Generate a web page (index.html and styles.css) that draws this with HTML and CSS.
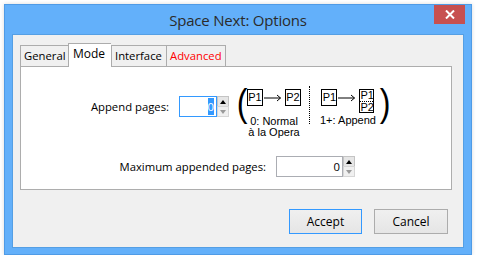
FILE: index.html
```html
<!DOCTYPE html>
<html lang="en">
  <head>
    <meta charset="UTF-8" />
    <title>Space Next: Options</title>
    <link rel="stylesheet" href="styles.css">
  </head>
  <body>
    <div class="window">
      <div class="titlebar">
        <span></span>
        <div class="title">Space Next: Options</div>
        <div class="close">
          <svg width="10" height="9" viewBox="0 0 10 9">
            <path d="M1 0.5 L9 8.5 M9 0.5 L1 8.5" stroke="#fff" stroke-width="2" />
          </svg>
        </div>
      </div>

      <div class="client">
        <div class="tabs">
          <div class="tab">General</div>
          <div class="tab active">Mode</div>
          <div class="tab">Interface</div>
          <div class="tab advanced">Advanced</div>
        </div>

        <div class="panel">
          <div class="row row-append">
            <div class="field-group">
              <label class="label label-append">Append pages:</label>
              <div class="field field-small focused"><span class="sel">0</span></div>
              <div class="spinner">
                <div class="spin up"><span class="tri tri-up"></span></div>
                <div class="spin down"><span class="tri tri-down"></span></div>
              </div>
            </div>

            <div class="diagram">
              <span class="paren">(</span>
              <div class="mode">
                <div class="flow">
                  <div class="page">P1</div>
                  <svg class="arrow" width="18" height="8" viewBox="0 0 18 8">
                    <path d="M0 4 H16.5 M13 1 L16.5 4 L13 7" stroke="#000" stroke-width="1" fill="none" />
                  </svg>
                  <div class="page">P2</div>
                </div>
                <div class="caption">0: Normal<br />à la Opera</div>
              </div>
              <div class="sep"></div>
              <div class="mode">
                <div class="flow">
                  <div class="page">P1</div>
                  <svg class="arrow" width="18" height="8" viewBox="0 0 18 8">
                    <path d="M0 4 H16.5 M13 1 L16.5 4 L13 7" stroke="#000" stroke-width="1" fill="none" />
                  </svg>
                  <div class="page stack"><span>P1</span><span class="p2">P2</span></div>
                </div>
                <div class="caption">1+: Append</div>
              </div>
              <span class="paren paren-close">)</span>
            </div>
          </div>

          <div class="row row-max">
            <div class="field-group">
              <label class="label label-max">Maximum appended pages:</label>
              <div class="field field-wide">0</div>
              <div class="spinner">
                <div class="spin up"><span class="tri tri-up"></span></div>
                <div class="spin down"><span class="tri tri-down"></span></div>
              </div>
            </div>
          </div>
        </div>

        <div class="buttons">
          <button class="btn default">Accept</button>
          <button class="btn">Cancel</button>
        </div>
      </div>
    </div>
  </body>
</html>
```

FILE: styles.css
```css
body {
  margin: 0;
  background: #fff;
  font-family: "Open Sans", "Noto Sans", sans-serif;
  font-size: 11.3px;
  color: #000;
}

.window {
  box-sizing: border-box;
  width: 468px;
  height: 251px;
  margin: 4px 0 0 4px;
  background: #63b0fa;
  border: 1px solid #4f9be6;
  box-shadow: 0 0 4px rgba(0, 0, 0, 0.15);
}

.titlebar {
  height: 29px;
  display: grid;
  grid-template-columns: 1fr auto 1fr;
  align-items: start;
}

.title {
  font-size: 15px;
  color: #2b2b2b;
  line-height: 30px;
  letter-spacing: -0.2px;
}

.close {
  justify-self: end;
  width: 31px;
  height: 19px;
  margin-right: 6px;
  background: #c75050;
  display: flex;
  align-items: center;
  justify-content: center;
}

.client {
  box-sizing: border-box;
  width: 452px;
  height: 214px;
  margin-left: 7px;
  background: #f0f0f0;
  border: 1px solid #559fe4;
  padding: 8px 15px 0 7px;
}

/* tabs */
.tabs {
  display: flex;
  align-items: flex-end;
  height: 23px;
}

.tab {
  box-sizing: border-box;
  height: 21px;
  padding: 0 3px;
  border: 1px solid #acacac;
  border-bottom: none;
  border-right: none;
  background: #f0f0f0;
  line-height: 20px;
  color: #000;
  white-space: nowrap;
}

.tab:last-child {
  border-right: 1px solid #acacac;
}

.tab:nth-child(1) { width: 48px; }
.tab:nth-child(3) { width: 55px; }
.tab:nth-child(4) { width: 60px; }

.tab.active {
  width: 43px;
  height: 24px;
  margin-bottom: -1px;
  padding: 0 4px;
  background: #fff;
  line-height: 20px;
  font-size: 12px;
  position: relative;
  z-index: 1;
}

.tab.advanced {
  color: #ff0000;
}

.panel {
  box-sizing: border-box;
  width: 432px;
  height: 124px;
  background: #fff;
  border: 1px solid #adadad;
}

/* rows */
.row {
  display: flex;
  align-items: flex-start;
}

.row-append {
  margin-top: 19px;
  padding-left: 48px;
}

.row-max {
  margin-top: 18px;
  padding-left: 85px;
}

.field-group {
  display: flex;
  align-items: center;
}

.row-append .field-group {
  margin-top: 10px;
}

.label {
  text-align: right;
  margin-right: 10px;
  white-space: nowrap;
}

.label-append { width: 100px; }
.label-max { width: 160px; }

.field {
  box-sizing: border-box;
  height: 21px;
  border: 1px solid #abadb3;
  background: #fff;
  text-align: right;
  line-height: 19px;
  padding-right: 2px;
}

.field-small { width: 38px; }
.field-wide { width: 67px; }

.field.focused {
  border-color: #3399ff;
}

.sel {
  background: #3399ff;
  color: #fff;
  padding: 1px 0;
}

.spinner {
  width: 12px;
  height: 21px;
  display: flex;
  flex-direction: column;
}

.spin {
  flex: 1;
  display: flex;
  align-items: center;
  justify-content: center;
  background: #f0f0f0;
  border: 1px solid #d6d6d6;
}

.spin.up {
  background: #e6e6e6;
  border-color: #c4c4c4;
  border-bottom: none;
}

.tri {
  width: 0;
  height: 0;
  border-left: 3.5px solid transparent;
  border-right: 3.5px solid transparent;
}

.tri-up { border-bottom: 4px solid #000; }
.tri-down { border-top: 4px solid #9a9a9a; }

/* diagram */
.diagram {
  display: flex;
  align-items: flex-start;
  margin-left: 7px;
  font-family: "Liberation Sans", Arial, sans-serif;
}

.paren {
  display: block;
  width: 9px;
  height: 36px;
  font-size: 38px;
  line-height: 34px;
  text-align: center;
  transform: scaleX(0.85);
}

.paren-close {
  margin-left: 3px;
}

.mode {
  display: flex;
  flex-direction: column;
  align-items: center;
  margin-top: 3px;
}

.mode:first-of-type {
  margin-left: 2px;
}

.flow {
  display: flex;
  align-items: flex-start;
}

.page {
  box-sizing: border-box;
  width: 16px;
  height: 17px;
  border: 1px solid #000;
  font-size: 11px;
  line-height: 15px;
  text-align: center;
}

.arrow {
  margin: 5px 3px 0 1px;
}

.page.stack {
  width: 15px;
  height: 24px;
  display: flex;
  flex-direction: column;
  line-height: 11px;
}

.page.stack .p2 {
  border-top: 1px dotted #000;
}

.caption {
  font-size: 11px;
  line-height: 11px;
  text-align: center;
  margin-top: 10px;
}

.sep {
  width: 0;
  height: 38px;
  border-left: 1px dotted #000;
  margin: 0 10px 0 8px;
}

.mode + .sep + .mode .caption {
  margin-top: 2px;
}

/* buttons */
.buttons {
  display: flex;
  justify-content: flex-end;
  gap: 12px;
  margin-top: 19px;
}

.btn {
  box-sizing: border-box;
  width: 74px;
  height: 25px;
  font-family: inherit;
  font-size: 12px;
  color: #000;
  background: linear-gradient(#f0f0f0, #e5e5e5);
  border: 1px solid #acacac;
  padding: 0;
}

.btn.default {
  width: 73px;
  border-color: #3399ff;
}
```
